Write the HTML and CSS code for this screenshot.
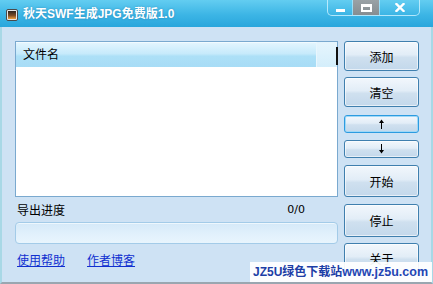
FILE: index.html
```html
<!DOCTYPE html>
<html lang="zh-CN">
<head>
<meta charset="utf-8">
<title>秋天SWF生成JPG免费版1.0</title>
<link rel="stylesheet" href="styles.css">
</head>
<body>
<div class="window">
  <div class="titlebar">
    <svg class="app-icon" width="12" height="12" viewBox="0 0 12 12">
      <defs>
        <linearGradient id="ig" x1="0" y1="0" x2="0" y2="1">
          <stop offset="0" stop-color="#2c2420"/>
          <stop offset="0.55" stop-color="#7a4a25"/>
          <stop offset="1" stop-color="#f0a040"/>
        </linearGradient>
      </defs>
      <rect x="0.5" y="0.5" width="11" height="11" rx="1.5" fill="#e8e8e8" stroke="#4a4a4a"/>
      <rect x="2" y="2" width="8" height="8" fill="url(#ig)"/>
    </svg>
    <span class="title">秋天SWF生成JPG免费版1.0</span>
    <div class="controls">
      <div class="ctl ctl-min"><span class="g-min"></span></div>
      <div class="ctl ctl-max"><span class="g-max"></span></div>
      <div class="ctl ctl-close">
        <svg width="10" height="9" viewBox="0 0 10 9"><path d="M1.5 1 L8.5 8 M8.5 1 L1.5 8" stroke="#fff" stroke-width="2.4" stroke-linecap="square"/></svg>
      </div>
    </div>
  </div>
  <div class="client">
    <div class="left">
      <div class="listbox">
        <div class="list-header">
          <div class="col-name">文件名</div>
          <div class="col-rest"><span class="col-mark"></span></div>
        </div>
        <div class="list-body"></div>
      </div>
      <div class="status">
        <span>导出进度</span>
        <span class="count">0/0</span>
      </div>
      <div class="progress"></div>
      <div class="links">
        <a href="#">使用帮助</a>
        <a href="#">作者博客</a>
      </div>
    </div>
    <div class="right">
      <button class="btn b-add">添加</button>
      <button class="btn b-clear">清空</button>
      <button class="btn small focus b-up" aria-label="上移">
        <svg width="7" height="10" viewBox="0 0 7 10"><path d="M3.5 10 V1.5" stroke="#000" stroke-width="1"/><path d="M1 4 L3.5 0.5 L6 4 Z" fill="#000"/></svg>
      </button>
      <button class="btn small b-down" aria-label="下移">
        <svg width="7" height="10" viewBox="0 0 7 10"><path d="M3.5 0 V8.5" stroke="#000" stroke-width="1"/><path d="M1 6 L3.5 9.5 L6 6 Z" fill="#000"/></svg>
      </button>
      <button class="btn b-start">开始</button>
      <button class="btn b-stop">停止</button>
      <button class="btn b-about">关于</button>
    </div>
  </div>
  <div class="watermark"><span class="wm-cn">JZ5U绿色下载站</span><span class="wm-url">www.jz5u.com</span></div>
</div>
</body>
</html>
```
FILE: styles.css
```css
* { box-sizing: border-box; }
html, body { margin: 0; padding: 0; }
body {
  width: 433px;
  height: 284px;
  overflow: hidden;
  background: #cee2f4;
  font-family: "Liberation Sans", "Noto Sans CJK SC", sans-serif;
  font-size: 12px;
  color: #000;
}
.window {
  position: relative;
  width: 433px;
  height: 284px;
  display: flex;
  flex-direction: column;
}
.titlebar {
  height: 27px;
  flex: none;
  display: flex;
  align-items: flex-start;
  background: linear-gradient(#63cdf1, #3cb5e5 55%, #29a6dc);
  padding-left: 6px;
}
.app-icon {
  margin-top: 9px;
  flex: none;
}
.title {
  margin-left: 5px;
  margin-top: 6px;
  color: #fff;
  font-weight: bold;
  font-size: 12px;
  line-height: 16px;
  text-shadow: 0 0 2px rgba(20, 90, 140, 0.5);
}
.controls {
  margin-left: auto;
  margin-right: 13px;
  display: flex;
  height: 16px;
  border: 1px solid rgba(200, 240, 255, 0.85);
  border-top: none;
  border-radius: 0 0 5px 5px;
  overflow: hidden;
}
.ctl {
  height: 15px;
  display: flex;
  align-items: center;
  justify-content: center;
}
.ctl-min { width: 25px; border-right: 1px solid rgba(200, 240, 255, 0.6); }
.ctl-max { width: 26px; background: linear-gradient(#9aa2a6, #868d91); }
.ctl-close { width: 40px; border-left: 1px solid rgba(200, 240, 255, 0.6); }
.g-min {
  display: block;
  width: 9px;
  height: 3px;
  background: #fff;
  margin-top: 6px;
}
.g-max {
  display: block;
  width: 11px;
  height: 8px;
  border: 2px solid #fff;
  border-top-width: 3px;
}
.client {
  flex: 1;
  display: flex;
  gap: 6px;
  padding: 14px 12px 0 13px;
  border-left: 2px solid #a8d8e6;
  border-right: 2px solid #a8d8e6;
  border-bottom: 2px solid #9aa6b0;
}
.left {
  width: 325px;
  display: flex;
  flex-direction: column;
}
.listbox {
  height: 156px;
  border: 1px solid #7aa9cf;
  background: #fff;
  display: flex;
  flex-direction: column;
}
.list-header {
  height: 25px;
  display: flex;
  flex: none;
}
.col-name {
  width: 301px;
  padding-left: 7px;
  line-height: 24px;
  background: linear-gradient(#e2f5fe, #c6eafb 45%, #ade0f7 55%, #a7dcf6);
  border-top: 1px solid #f2fbff;
  border-right: 1px solid #e8f6fd;
}
.col-rest {
  flex: 1;
  position: relative;
  background: linear-gradient(#e6f5fd, #d4eefb);
}
.col-mark {
  position: absolute;
  left: 19px;
  top: 5px;
  width: 2px;
  height: 18px;
  background: #111;
}
.list-body { flex: 1; }
.status {
  height: 25px;
  display: flex;
  justify-content: space-between;
  align-items: center;
  padding: 0 33px 0 2px;
  font-size: 12px;
}
.count { font-family: "DejaVu Sans", sans-serif; font-size: 11px; }
.progress {
  height: 22px;
  border: 1px solid #a3cbe8;
  border-radius: 4px;
  background: linear-gradient(#d5e9f8, #e2f1fc 60%, #e8f5fd);
  box-shadow: inset 0 1px 0 #eef7fd;
}
.links {
  margin-top: 10px;
  padding-left: 2px;
  display: flex;
  gap: 22px;
  line-height: 14px;
}
.links a {
  color: #1030d0;
  text-decoration: underline;
  font-size: 12px;
}
.right {
  width: 75px;
  display: flex;
  flex-direction: column;
}
.btn {
  display: flex;
  align-items: center;
  justify-content: center;
  width: 75px;
  height: 30px;
  padding: 0;
  font-family: "Liberation Sans", "Noto Sans CJK SC", sans-serif;
  font-size: 12px;
  color: #000;
  border: 1px solid #3f7fae;
  border-radius: 3px;
  background: linear-gradient(#f2f7fc, #e2edf7 45%, #cfe0ef 55%, #c3d8eb);
  box-shadow: inset 0 0 0 1px rgba(255, 255, 255, 0.6);
}
.btn.small { height: 18px; }
.btn svg { display: block; }
.btn.focus {
  border-color: #2c9be0;
  box-shadow: inset 0 0 0 1px #9fd8f7;
}
.b-clear { margin-top: 6px; }
.b-up { margin-top: 8px; }
.b-down { margin-top: 7px; }
.b-start { margin-top: 7px; height: 32px; }
.b-stop { margin-top: 7px; height: 33px; }
.b-about { margin-top: 6px; }
.watermark {
  position: absolute;
  left: 250px;
  top: 262px;
  width: 182px;
  height: 20px;
  background: rgba(255, 255, 255, 0.93);
  padding-left: 3px;
  font-weight: bold;
  font-size: 12px;
  line-height: 20px;
  white-space: nowrap;
  color: #1d3ea6;
}
.wm-url { color: #2446b4; font-size: 12.5px; }
```
